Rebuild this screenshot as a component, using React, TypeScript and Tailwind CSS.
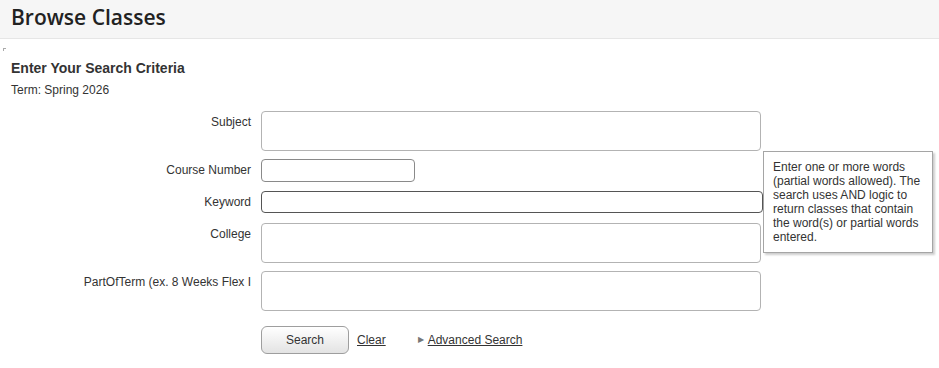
import React from 'react';

const labelCls = 'w-[261px] shrink-0 pr-[10px] pt-[4px] text-right text-[12px] leading-[14px] text-[#333]';

const Field: React.FC<{ label: string; box: string; className?: string }> = ({ label, box, className }) => (
    <div className={`flex ${className ?? ''}`}>
        <div className={labelCls}>{label}</div>
        <div className={`rounded-[4px] border bg-white ${box}`} />
    </div>
);

export default function App() {
    return (
        <div className="relative min-h-[368px] w-[939px] bg-white font-['Liberation_Sans',Arial,sans-serif] text-[#333]">
            <div className="h-[39px] border-b border-[#e6e6e6] bg-[#f6f6f6] pl-[11px] pt-[3px]">
                <h1 className="font-['Open_Sans',sans-serif] text-[21px] font-semibold leading-[28px] text-[#222]">
                    Browse Classes
                </h1>
            </div>

            <div className="ml-[3px] mt-[9px] h-[3px] w-[3px] border-l border-t border-[#aaa]" />

            <div className="px-[11px] pt-[8px]">
                <h2 className="text-[14px] font-bold leading-[18px] text-[#333]">Enter Your Search Criteria</h2>
                <p className="mt-[6px] text-[12px] leading-[14px]">Term: Spring 2026</p>
            </div>

            <div className="mt-[14px]">
                <Field label="Subject" box="h-[40px] w-[500px] border-[#b3b3b3]" />
                <Field label="Course Number" box="h-[23px] w-[154px] border-[#8a8a8a]" className="mt-[8px]" />
                <Field label="Keyword" box="h-[22px] w-[502px] border-[#555]" className="mt-[9px]" />
                <Field label="College" box="h-[40px] w-[500px] border-[#b3b3b3]" className="mt-[10px]" />
                <Field label="PartOfTerm (ex. 8 Weeks Flex I" box="h-[40px] w-[500px] border-[#b3b3b3]" className="mt-[8px]" />

                <div className="mt-[15px] flex items-center pl-[261px]">
                    <button className="h-[28px] w-[88px] rounded-[6px] border border-[#9e9e9e] bg-gradient-to-b from-white to-[#e3e3e3] text-[12px] text-[#333]">
                        Search
                    </button>
                    <a className="ml-[8px] text-[12px] text-[#333] underline">Clear</a>
                    <span className="ml-[32px] text-[8px] text-[#777]">▶</span>
                    <a className="ml-[4px] text-[12px] text-[#333] underline">Advanced Search</a>
                </div>
            </div>

            <div className="absolute left-[763px] top-[151px] w-[170px] border border-[#a5a5a5] bg-white px-[9px] pb-[8px] pt-[8px] text-[12px] leading-[14px] text-[#333] shadow-[2px_2px_2px_rgba(0,0,0,0.2)]">
                Enter one or more words (partial words allowed). The search uses AND logic to return classes that contain the word(s) or partial words entered.
            </div>
        </div>
    );
}
